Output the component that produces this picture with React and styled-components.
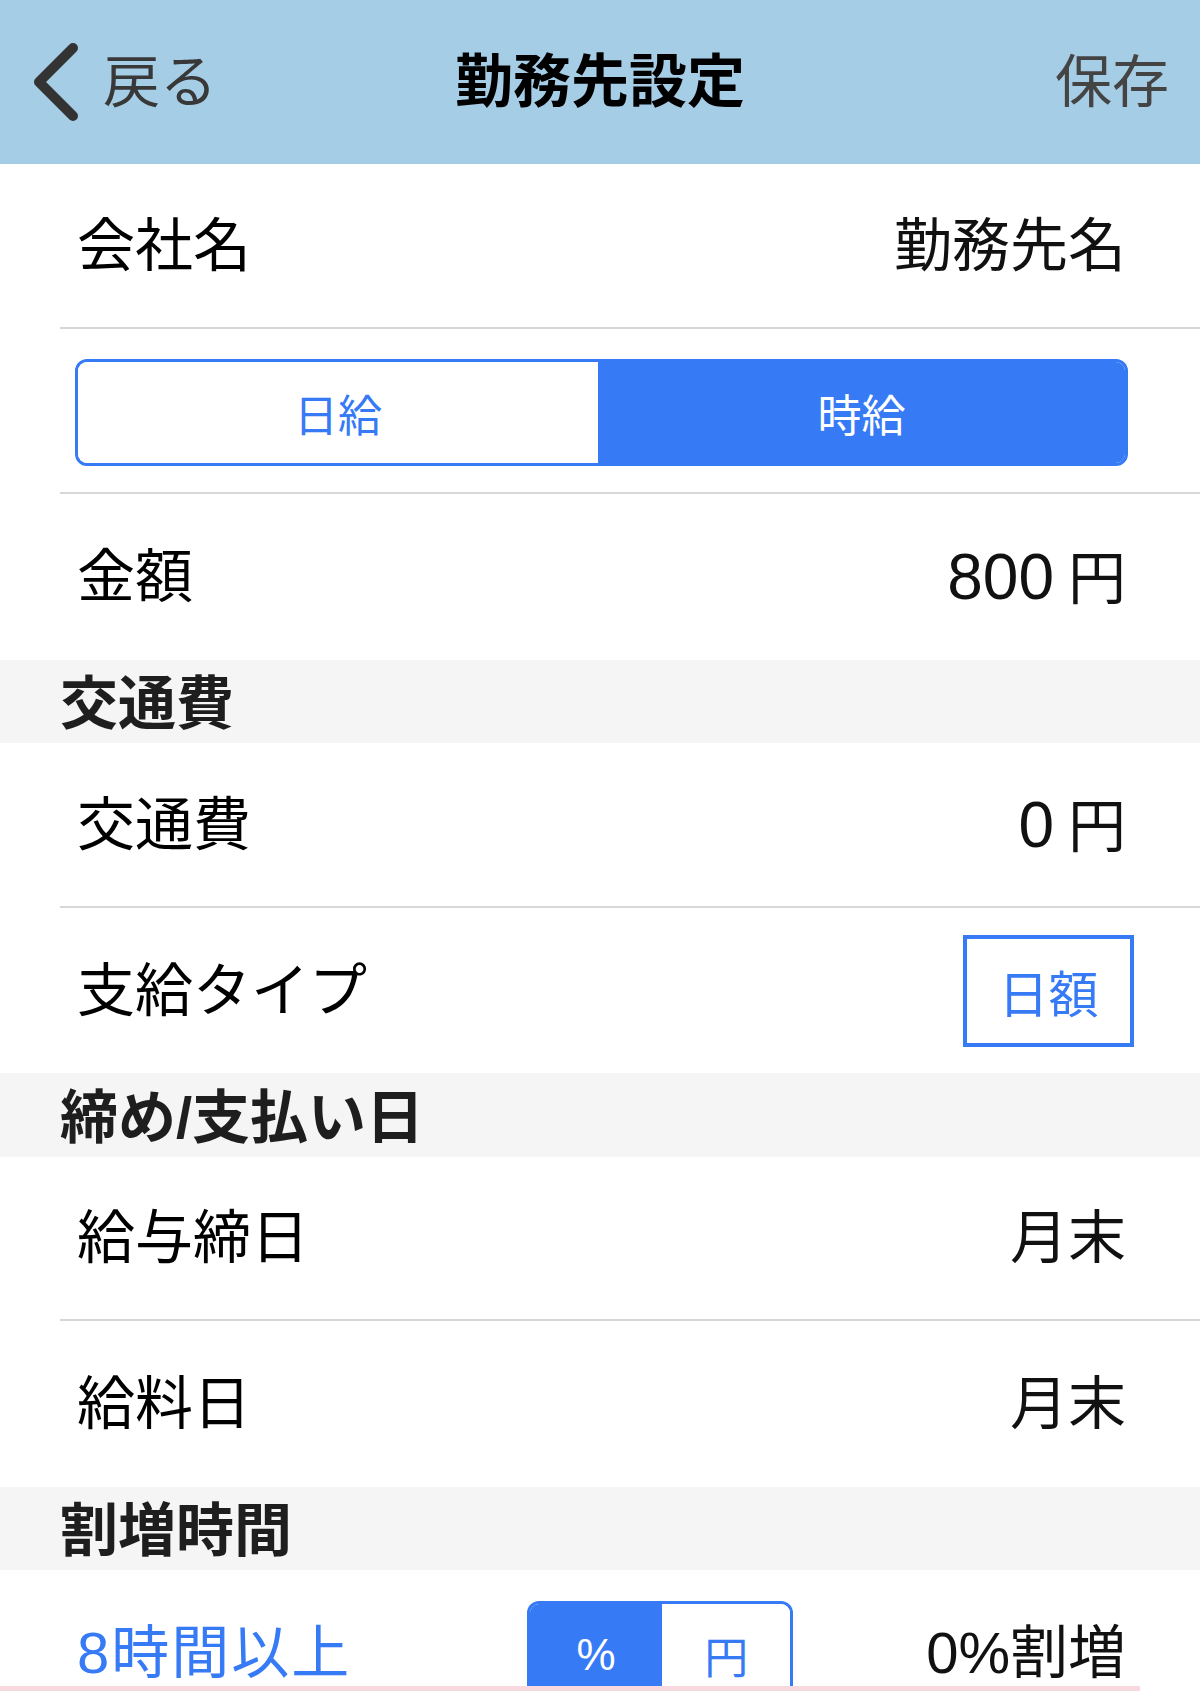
import React from 'react';
import styled, { createGlobalStyle } from 'styled-components';

const GlobalStyle = createGlobalStyle`
  html, body {
    margin: 0;
    padding: 0;
    background: #ffffff;
  }
  body {
    font-family: "Liberation Sans", "Noto Sans CJK JP", sans-serif;
    color: #000;
    overflow: hidden;
  }
`;

const Page = styled.div`
  width: 1200px;
  height: 1691px;
  overflow: hidden;
  position: relative;
`;

const NavBar = styled.header`
  height: 164px;
  background-color: #a6cde6;
  display: grid;
  grid-template-columns: 1fr auto 1fr;
  align-items: center;
  padding: 0 31px 0 31px;
  box-sizing: border-box;
`;

const BackButton = styled.div`
  display: flex;
  align-items: center;
  gap: 22px;
  color: #383838;
  font-size: 57px;
  line-height: 1;
`;

const NavTitle = styled.h1`
  margin: 0;
  font-size: 58px;
  font-weight: 700;
  color: #000;
  line-height: 1;
`;

const SaveButton = styled.div`
  justify-self: end;
  color: #444;
  font-size: 57px;
  line-height: 1;
`;

const Row = styled.div`
  margin-left: 60px;
  height: ${(p) => p.h || 165}px;
  padding: 0 ${(p) => p.pr ?? 74}px 0 ${(p) => p.pl ?? 17}px;
  box-sizing: border-box;
  display: flex;
  align-items: center;
  justify-content: space-between;
  border-bottom: ${(p) => (p.divider ? '2px solid #d7d7d7' : 'none')};
`;

const Label = styled.span`
  font-size: 58px;
  line-height: 1;
  color: ${(p) => (p.accent ? '#367af6' : '#000')};
  letter-spacing: ${(p) => (p.accent ? '2px' : '0')};
`;

const Value = styled.span`
  font-size: 58px;
  line-height: 1;
  color: #111;
`;

const Num = styled.span`
  font-size: 64px;
  margin-right: 14px;
`;

const SectionHeader = styled.div`
  height: ${(p) => p.h || 83}px;
  background-color: #f5f5f5;
  display: flex;
  align-items: center;
  padding: 5px 0 0 60px;
  box-sizing: border-box;
  font-size: 58px;
  font-weight: 700;
  color: #1e1e1e;
  line-height: 1;
`;

const Segmented = styled.div`
  flex: 1;
  height: 107px;
  display: grid;
  grid-template-columns: 523fr 530fr;
  border: 3px solid #367af6;
  border-radius: 12px;
  overflow: hidden;
  box-sizing: border-box;
  margin-top: 4px;
`;

const Segment = styled.div`
  display: flex;
  align-items: center;
  justify-content: center;
  font-size: 44px;
  background-color: ${(p) => (p.active ? '#367af6' : '#ffffff')};
  color: ${(p) => (p.active ? '#ffffff' : '#367af6')};
`;

const OutlineButton = styled.div`
  width: 171px;
  height: 112px;
  box-sizing: border-box;
  border: 4px solid #367af6;
  display: flex;
  align-items: center;
  justify-content: center;
  color: #367af6;
  font-size: 50px;
  margin-right: -8px;
`;

const Premium = styled.div`
  align-self: stretch;
  display: flex;
  align-items: center;
  gap: 133px;
`;

const UnitToggle = styled.div`
  align-self: flex-start;
  margin-top: 31px;
  width: 266px;
  height: 108px;
  display: grid;
  grid-template-columns: 135fr 131fr;
  border: 3px solid #367af6;
  border-radius: 12px;
  overflow: hidden;
  box-sizing: border-box;
`;

const AdStrip = styled.div`
  position: absolute;
  left: 0;
  bottom: 0;
  width: 1140px;
  height: 5px;
  background-color: #f8d9df;
`;

function Chevron() {
  return (
    <svg width="50" height="80" viewBox="0 0 50 80">
      <polyline
        points="42,6 8,40 42,74"
        fill="none"
        stroke="#333"
        strokeWidth="10"
        strokeLinecap="round"
        strokeLinejoin="round"
      />
    </svg>
  );
}

export default function App() {
  return (
    <Page>
      <GlobalStyle />
      <NavBar>
        <BackButton>
          <Chevron />
          <span>戻る</span>
        </BackButton>
        <NavTitle>勤務先設定</NavTitle>
        <SaveButton>保存</SaveButton>
      </NavBar>

      <Row divider>
        <Label>会社名</Label>
        <Value>勤務先名</Value>
      </Row>
      <Row divider pl={15} pr={72}>
        <Segmented>
          <Segment>日給</Segment>
          <Segment active>時給</Segment>
        </Segmented>
      </Row>
      <Row h={166}>
        <Label>金額</Label>
        <Value>
          <Num>800</Num>円
        </Value>
      </Row>

      <SectionHeader>交通費</SectionHeader>
      <Row divider>
        <Label>交通費</Label>
        <Value>
          <Num>0</Num>円
        </Value>
      </Row>
      <Row>
        <Label>支給タイプ</Label>
        <OutlineButton>日額</OutlineButton>
      </Row>

      <SectionHeader h={84}>締め/支払い日</SectionHeader>
      <Row divider h={164}>
        <Label>給与締日</Label>
        <Value>月末</Value>
      </Row>
      <Row h={166}>
        <Label>給料日</Label>
        <Value>月末</Value>
      </Row>

      <SectionHeader>割増時間</SectionHeader>
      <Row>
        <Label accent>8時間以上</Label>
        <Premium>
          <UnitToggle>
            <Segment active>%</Segment>
            <Segment>円</Segment>
          </UnitToggle>
          <Value>0%割増</Value>
        </Premium>
      </Row>
      <AdStrip />
    </Page>
  );
}
